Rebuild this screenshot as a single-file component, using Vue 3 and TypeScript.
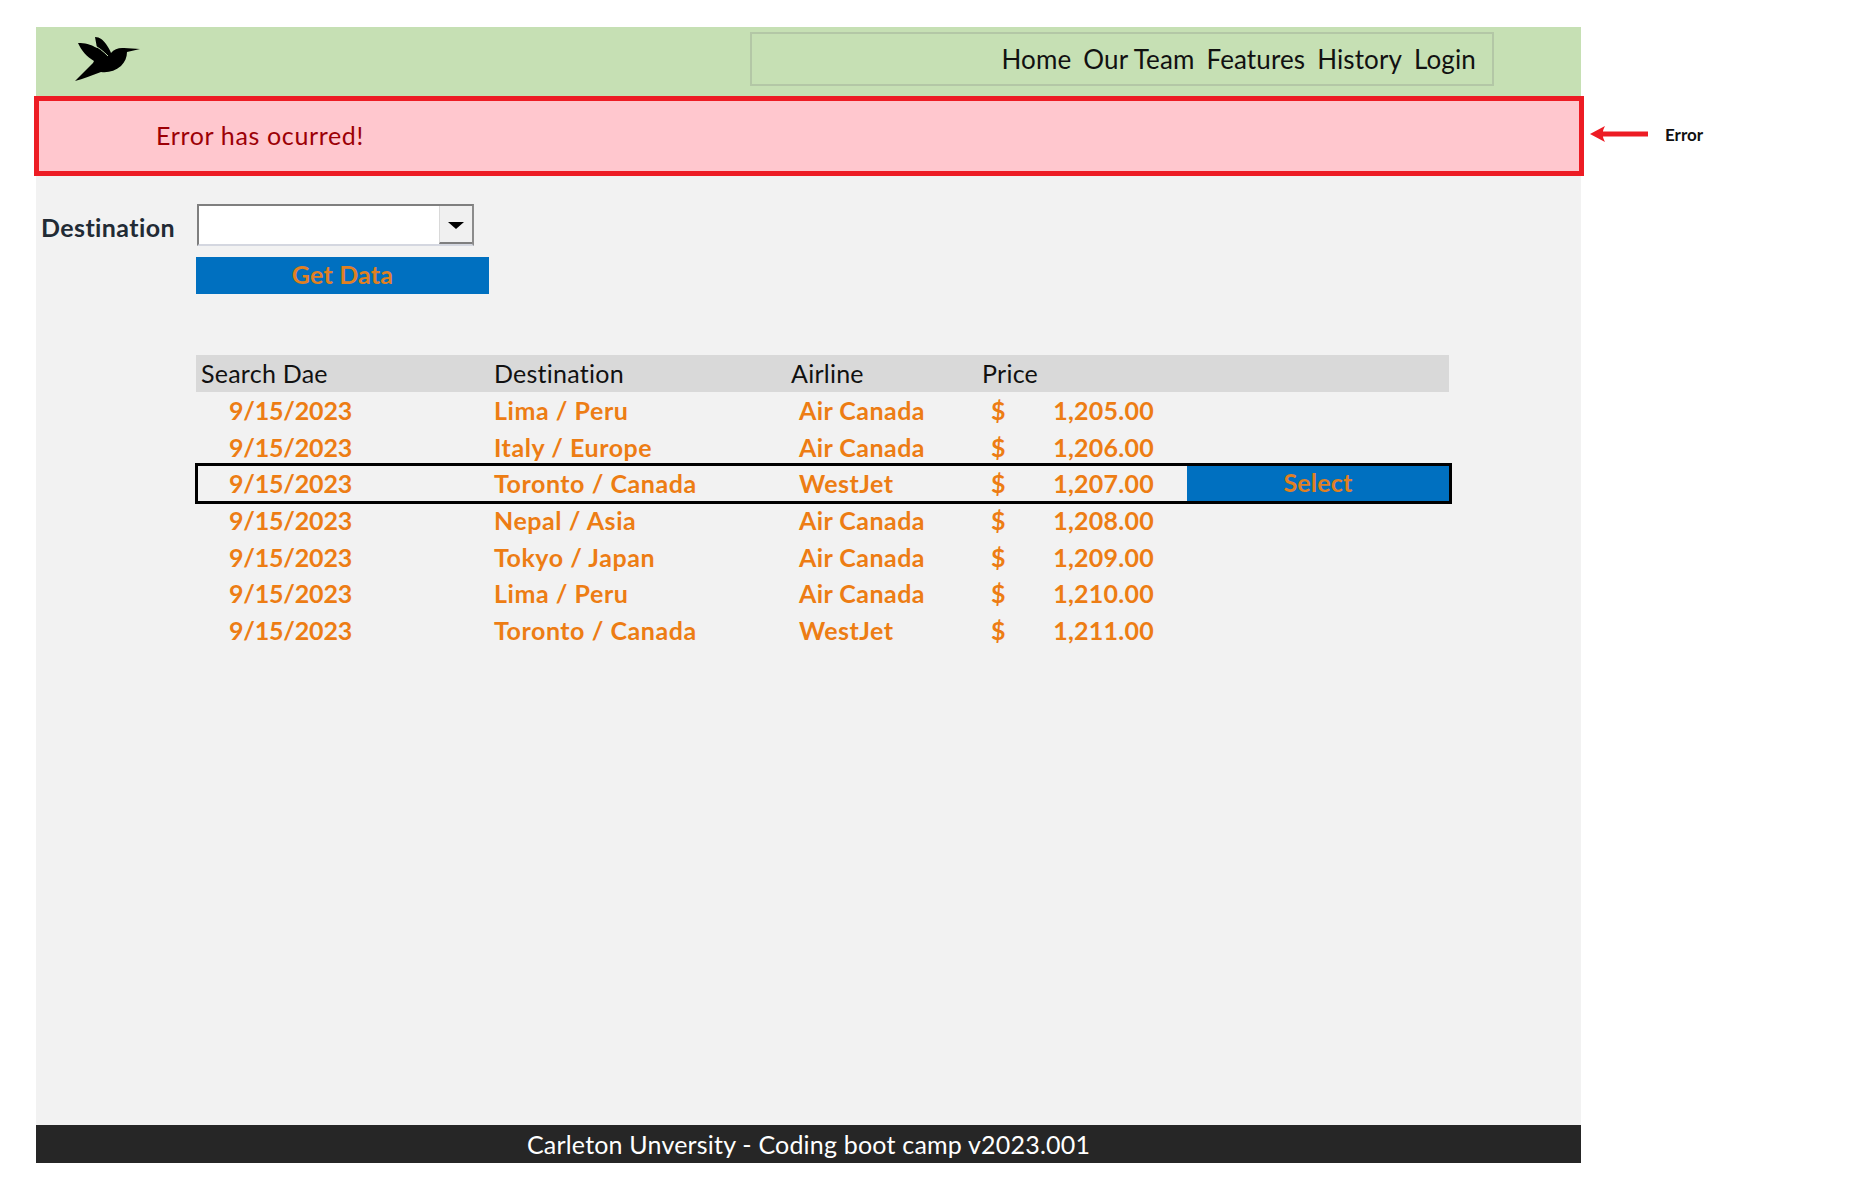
<template>
  <div class="page">
    <header class="topbar">
      <svg class="logo" viewBox="0 0 100 70" aria-label="Hummingbird logo">
        <path d="M18 23 C25 23 30 24 37 28 L35 17 C40 17 43 20 46 24 C48 27 50 30 51 33 C54 29 59 27.500 64 28 L80 29 L67 32 C67 37 65 42 61 46 C55 51 48 53 41 52 C32 55 23 59 15 61 C21 55 27 49 33 43 L34 41 C27 37 21 30 18 23 Z" />
        <path class="logo-gap" d="M33 25 C38 27 43 31 48 36" />
      </svg>
      <nav class="nav">
        <a v-for="link in links" :key="link">{{ link }}</a>
      </nav>
    </header>

    <div class="alert-row">
      <div class="alert">Error has ocurred!</div>
      <div class="note">
        <svg class="note-arrow" viewBox="0 0 60 20">
          <path d="M59 7.500 H14 C14 6 15 4 16 2 L1 10 L16 18 C15 16 14 14 14 12.500 H59 Z" />
        </svg>
        <span>Error</span>
      </div>
    </div>

    <main class="panel">
      <section class="search">
        <label class="search-label">Destination</label>
        <div class="combo">
          <div class="combo-value"></div>
          <div class="combo-arrow"><i></i></div>
        </div>
        <button class="btn get-data">Get Data</button>
      </section>

      <section class="results">
        <div class="row head">
          <div v-for="col in columns" :key="col">{{ col }}</div>
        </div>
        <div
          v-for="(r, i) in rows"
          :key="i"
          class="row item"
          :class="{ selected: i === selectedRow }"
        >
          <div class="c-date">{{ r.date }}</div>
          <div class="c-dest">{{ r.dest }}</div>
          <div class="c-air">{{ r.airline }}</div>
          <div class="c-price"><span>$</span><span class="amount">{{ r.price }}</span></div>
          <button v-if="i === selectedRow" class="btn select">Select</button>
        </div>
      </section>
    </main>

    <footer class="footer">Carleton Unversity - Coding boot camp v2023.001</footer>
  </div>
</template>

<script setup lang="ts">
const links = ["Home", "Our Team", "Features", "History", "Login"];
const columns = ["Search Dae", "Destination", "Airline", "Price"];
const selectedRow = 2;

const rows = [
  { date: "9/15/2023", dest: "Lima / Peru", airline: "Air Canada", price: "1,205.00" },
  { date: "9/15/2023", dest: "Italy / Europe", airline: "Air Canada", price: "1,206.00" },
  { date: "9/15/2023", dest: "Toronto / Canada", airline: "WestJet", price: "1,207.00" },
  { date: "9/15/2023", dest: "Nepal / Asia", airline: "Air Canada", price: "1,208.00" },
  { date: "9/15/2023", dest: "Tokyo / Japan", airline: "Air Canada", price: "1,209.00" },
  { date: "9/15/2023", dest: "Lima / Peru", airline: "Air Canada", price: "1,210.00" },
  { date: "9/15/2023", dest: "Toronto / Canada", airline: "WestJet", price: "1,211.00" },
];
</script>

<style>
body {
  background: #fff;
}
</style>

<style scoped>
.page {
  width: 1545px;
  margin-left: 36px;
  padding-top: 27px;
  font-family: Lato, "Open Sans", sans-serif;
  font-size: 25px;
}

.topbar {
  height: 69px;
  background: #c6e0b4;
  position: relative;
  display: flex;
  justify-content: flex-end;
  padding: 5px 87px 0 0;
  box-sizing: border-box;
}

.logo {
  position: absolute;
  left: 24px;
  top: -7px;
  width: 100px;
  height: 70px;
  fill: #000;
}

.logo-gap {
  fill: none;
  stroke: #c6e0b4;
  stroke-width: 1;
}

.nav {
  width: 744px;
  height: 54px;
  box-sizing: border-box;
  border: 2px solid #b3c7a6;
  display: flex;
  justify-content: flex-end;
  align-items: center;
  gap: 12px;
  padding-right: 16px;
  padding-bottom: 1px;
  font-size: 26px;
  letter-spacing: 0.12px;
  color: #111;
}

.alert-row {
  display: flex;
  margin: 0 -3px 0 -2px;
  height: 80px;
  align-items: center;
}

.alert {
  flex: 0 0 1550px;
  height: 80px;
  box-sizing: border-box;
  border: 5px solid #ed1c24;
  background: #ffc7ce;
  color: #9c0006;
  display: flex;
  align-items: center;
  padding: 0 0 3px 117px;
  letter-spacing: 0.65px;
}

.note {
  flex: none;
  display: flex;
  align-items: center;
  margin: -4px 0 0 5px;
  gap: 16px;
  font-size: 17px;
  font-weight: 700;
  color: #111;
}

.note-arrow {
  width: 60px;
  height: 20px;
  fill: #ed1c24;
}

.panel {
  height: 949px;
  box-sizing: border-box;
  background: #f2f2f2;
  padding-top: 28px;
}

.search {
  display: grid;
  grid-template-columns: 160px 293px;
  grid-template-rows: 42px 37px;
  row-gap: 11px;
}

.search-label {
  padding-left: 5px;
  font-weight: 700;
  letter-spacing: 0.4px;
  color: #222b35;
  line-height: 46px;
}

.combo {
  width: 277px;
  margin-left: 1px;
  display: flex;
  box-sizing: border-box;
  border: 2px solid #7f7f7f;
  border-right-color: #8c8c8c;
  border-bottom-color: #d4d7e0;
  background: #fff;
}

.combo-value {
  flex: 1;
}

.combo-arrow {
  width: 33px;
  background: #f0f0f0;
  border-left: 1px solid #d9d9d9;
  border-bottom: 2px solid #7f7f7f;
  display: flex;
  align-items: center;
  justify-content: center;
  padding-top: 2px;
  box-sizing: border-box;
}

.combo-arrow i {
  width: 0;
  height: 0;
  border: 8px solid transparent;
  border-top: 7px solid #000;
  border-bottom: 0;
}

.btn {
  border: 0;
  background: #0070c0;
  color: #e08022;
  font: 700 25px Lato, "Open Sans", sans-serif;
  letter-spacing: 0.2px;
  padding: 0 0 2px;
}

.get-data {
  grid-column: 2;
  padding-bottom: 4px;
}

.results {
  margin: 61px 0 0 160px;
  width: 1253px;
}

.row {
  display: grid;
  grid-template-columns: 294px 297px 191px 209px 262px;
  align-items: center;
  height: 36.6px;
  white-space: nowrap;
}

.head {
  height: 37px;
  background: #d9d9d9;
  color: #111;
  letter-spacing: 0.25px;
  padding-bottom: 2px;
  box-sizing: border-box;
}

.head > div {
  padding-left: 4px;
}

.head > div:first-child {
  padding-left: 5px;
}

.item {
  color: #ed7d14;
  font-weight: 700;
}

.selected {
  position: relative;
}

/* frame around the selected row, slightly wider on the right */
.selected::after {
  content: "";
  position: absolute;
  inset: -2px -3px -2px -1px;
  border: 3.5px solid #000;
  pointer-events: none;
}

.c-date {
  padding-left: 33px;
  letter-spacing: -0.2px;
}

.c-dest {
  padding-left: 4px;
  letter-spacing: 0.55px;
}

.c-air {
  padding-left: 12px;
  letter-spacing: 0.45px;
}

.c-price {
  display: flex;
  justify-content: space-between;
  padding: 0 33px 0 13px;
}

.amount {
  letter-spacing: 0.25px;
}

.select {
  height: 36.6px;
}

.footer {
  height: 38px;
  background: #262626;
  color: #fff;
  display: flex;
  align-items: center;
  justify-content: center;
  letter-spacing: 0.2px;
}
</style>
